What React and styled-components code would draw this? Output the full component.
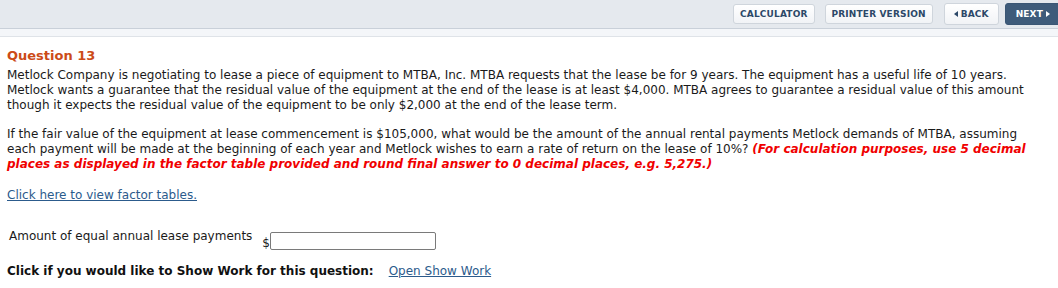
import React from "react";
import styled, { createGlobalStyle } from "styled-components";

const Global = createGlobalStyle`
  html, body { margin: 0; padding: 0; background: #fff; }
  body { font-family: Verdana, "DejaVu Sans", sans-serif; color: #1a1a1a; }
`;

const Page = styled.div`
  width: 1058px;
  height: 288px;
  overflow: hidden;
`;

const TopBar = styled.div`
  height: 28px;
  background: #e5e9ee;
  border-bottom: 1px solid #c9d0d9;
  display: flex;
  justify-content: flex-end;
  align-items: center;
`;

const SubBar = styled.div`
  height: 7px;
  background: #f4f6f9;
  border-bottom: 1px solid #dfe3e8;
`;

const Btn = styled.button`
  font-family: "DejaVu Sans", Verdana, sans-serif;
  font-weight: bold;
  font-size: 9px;
  letter-spacing: 0.15px;
  height: ${(p) => (p.$tall ? "22px" : "20px")};
  padding: 0 ${(p) => p.$px || 6}px;
  margin-left: ${(p) => p.$ml || 0}px;
  margin-right: ${(p) => p.$mr || 0}px;
  border-radius: 3px;
  border: 1px solid ${(p) => (p.$dark ? "#3a5674" : "#cfd5dc")};
  background: ${(p) => (p.$dark ? "#3e5b7a" : "linear-gradient(#ffffff, #f1f3f6)")};
  color: ${(p) => (p.$dark ? "#ffffff" : "#2c4868")};
  display: flex;
  align-items: center;
  gap: 3px;
  cursor: pointer;
  white-space: nowrap;
`;

const Tri = styled.span`
  width: 0;
  height: 0;
  border-top: 3.5px solid transparent;
  border-bottom: 3.5px solid transparent;
  ${(p) => (p.$left ? `border-right: 4px solid ${p.$c};` : `border-left: 4px solid ${p.$c};`)}
`;

const Content = styled.div`
  padding: 11px 20px 0 7px;
  font-size: 12px;
  line-height: 15px;
`;

const Title = styled.div`
  color: #cc4b17;
  font-weight: bold;
  font-size: 13px;
  line-height: 16px;
  margin-bottom: 4px;
`;

const Para = styled.p`
  margin: 0 0 14px 0;
`;

const Emph = styled.span`
  color: #f00000;
  font-weight: bold;
  font-style: italic;
`;

const Link = styled.a`
  color: #2c5b8c;
  text-decoration: underline;
  cursor: pointer;
`;

const FactorLink = styled(Link)`
  display: block;
  margin-top: 16px;
`;

const AmountRow = styled.div`
  display: flex;
  align-items: flex-end;
  margin-top: 26px;
  padding-left: 2px;
`;

const Label = styled.span`
  margin-right: 10px;
  padding-bottom: 6px;
`;

const Dollar = styled.span`
  font-size: 12px;
  line-height: 12px;
  padding-bottom: 1px;
`;

const Input = styled.input`
  width: 160px;
  height: 14px;
  border: 1px solid #7a7a7a;
  border-radius: 2px;
  padding: 1px 2px;
  margin: 0;
`;

const ShowRow = styled.div`
  margin-top: 14px;
  display: flex;
  gap: 15px;
`;

const Bold = styled.span`
  font-weight: bold;
  color: #111;
`;

export default function App() {
  return (
    <Page>
      <Global />
      <TopBar>
        <Btn>CALCULATOR</Btn>
        <Btn $ml={10}>PRINTER VERSION</Btn>
        <Btn $ml={11} $tall $px={9}>
          <Tri $left $c="#2c4868" />
          BACK
        </Btn>
        <Btn $ml={6} $tall $dark $px={10} $mr={-3}>
          NEXT
          <Tri $c="#ffffff" />
        </Btn>
      </TopBar>
      <SubBar />
      <Content>
        <Title>Question 13</Title>
        <Para>
          Metlock Company is negotiating to lease a piece of equipment to MTBA, Inc. MTBA requests that the lease be for 9 years. The equipment has a useful life of 10 years. Metlock wants a guarantee that the residual value of the equipment at the end of the lease is at least $4,000. MTBA agrees to guarantee a residual value of this amount though it expects the residual value of the equipment to be only $2,000 at the end of the lease term.
        </Para>
        <Para>
          If the fair value of the equipment at lease commencement is $105,000, what would be the amount of the annual rental payments Metlock demands of MTBA, assuming each payment will be made at the beginning of each year and Metlock wishes to earn a rate of return on the lease of 10%?{" "}
          <Emph>
            (For calculation purposes, use 5 decimal places as displayed in the factor table provided and round final answer to 0 decimal places, e.g. 5,275.)
          </Emph>
        </Para>
        <FactorLink>Click here to view factor tables.</FactorLink>
        <AmountRow>
          <Label>Amount of equal annual lease payments</Label>
          <Dollar>$</Dollar>
          <Input type="text" />
        </AmountRow>
        <ShowRow>
          <Bold>Click if you would like to Show Work for this question:</Bold>
          <Link>Open Show Work</Link>
        </ShowRow>
      </Content>
    </Page>
  );
}
